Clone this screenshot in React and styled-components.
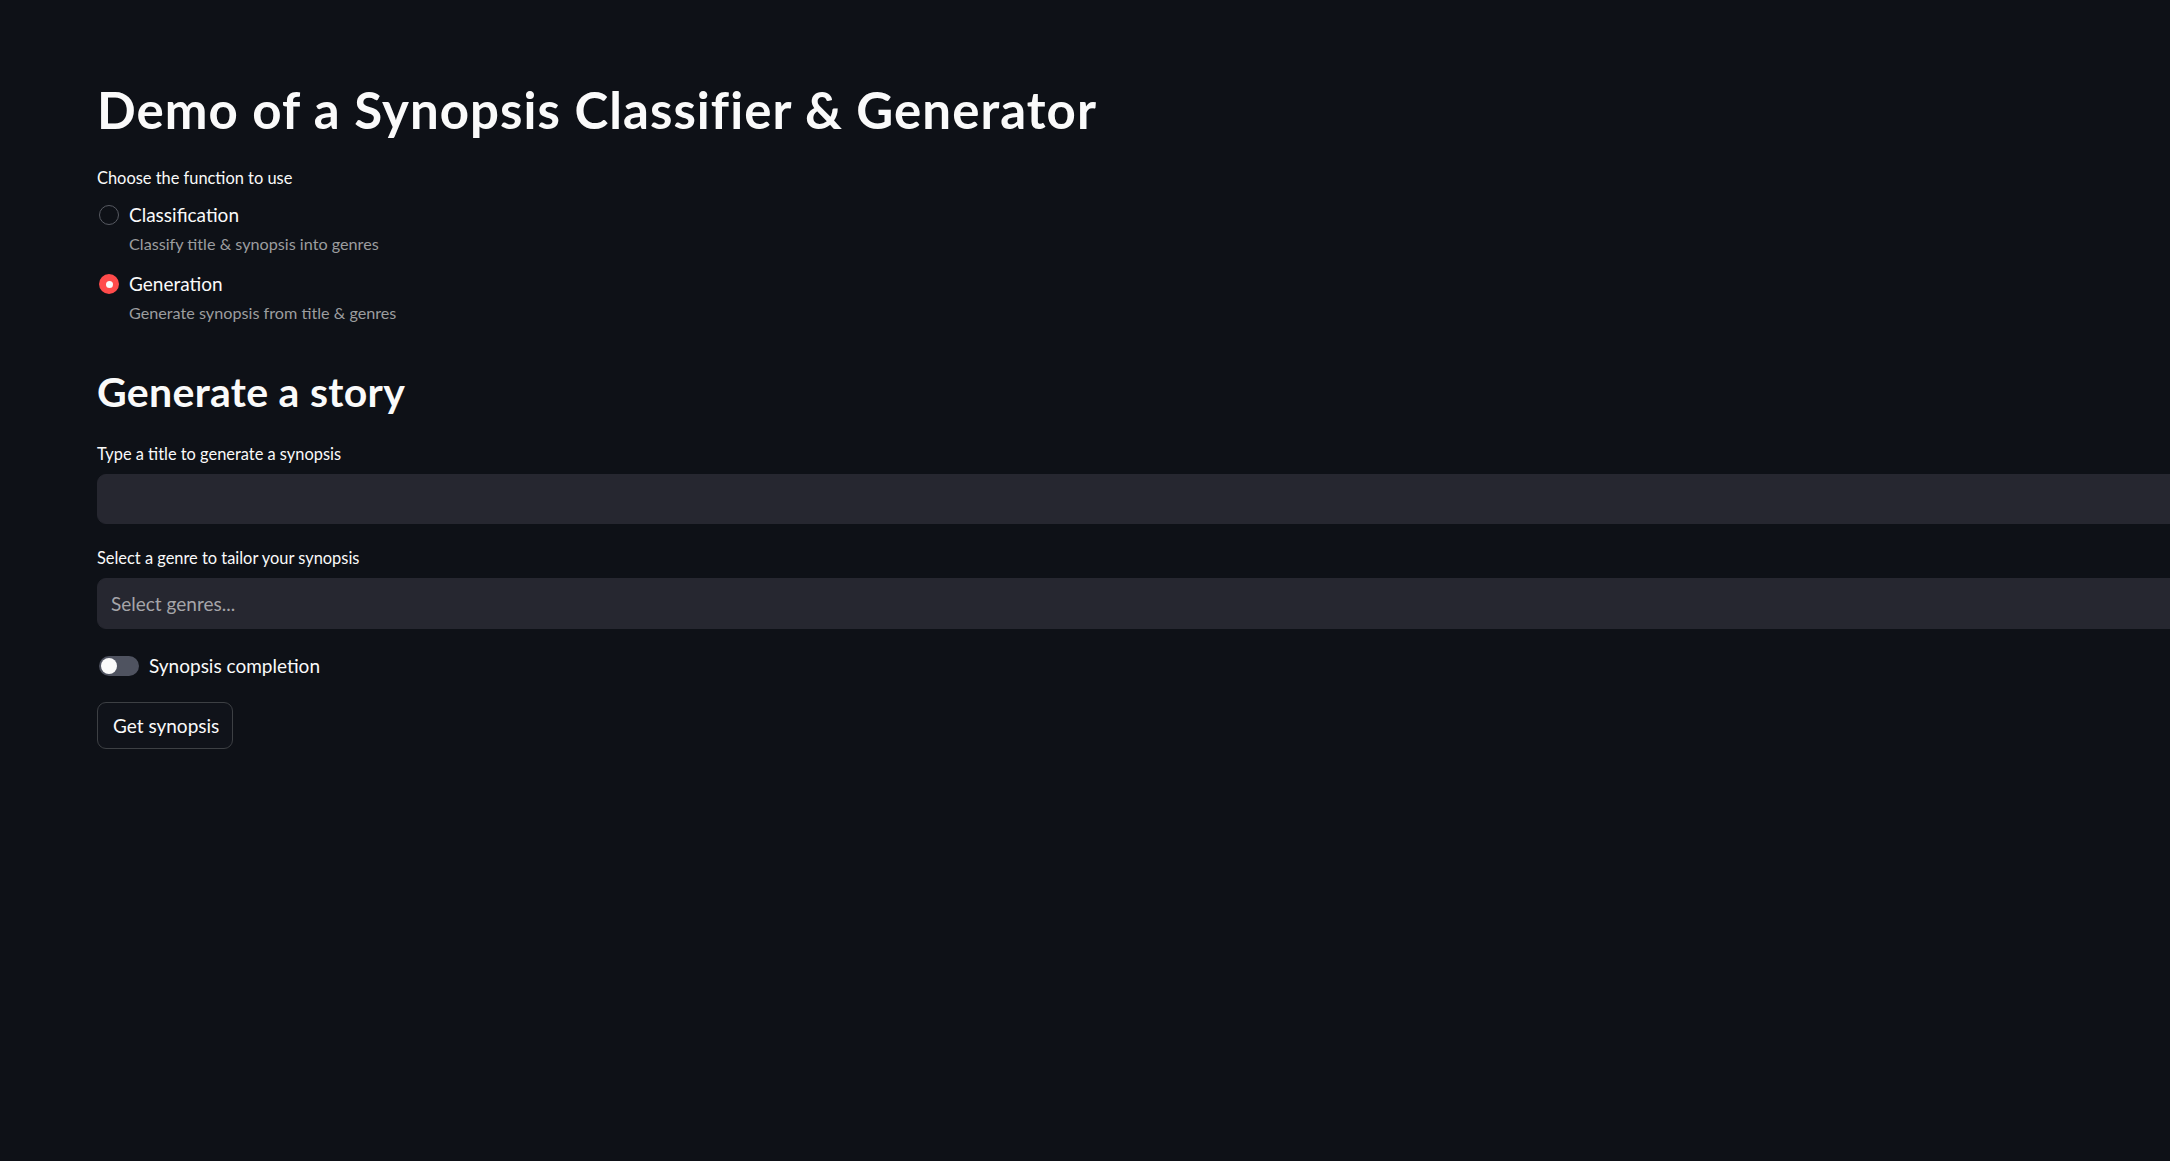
import React from "react";
import styled, { createGlobalStyle } from "styled-components";

const GlobalStyle = createGlobalStyle`
  html, body {
    margin: 0;
    padding: 0;
    background: #0e1117;
    overflow: hidden;
  }
  body {
    font-family: Lato, "Noto Sans", sans-serif;
    color: #fafafa;
  }
  * { box-sizing: border-box; }
`;

const Page = styled.main`
  width: 2240px;
  min-height: 100vh;
  padding: 80px 0 0 97px;
  display: flex;
  flex-direction: column;
`;

const Title = styled.h1`
  margin: 0;
  font-size: 51px;
  line-height: 60px;
  font-weight: 700;
  letter-spacing: 1.05px;
`;

const SectionTitle = styled.h2`
  margin: ${(p) => p.$top}px 0 0;
  font-size: 41px;
  line-height: 48px;
  font-weight: 700;
  letter-spacing: 0.3px;
`;

const Label = styled.div`
  margin-top: ${(p) => p.$top}px;
  font-size: 16.4px;
  line-height: 20px;
  font-weight: 400;
  color: #fafafa;
`;

const RadioList = styled.div`
  display: flex;
  flex-direction: column;
  gap: 18px;
  margin-top: 15px;
`;

const RadioOption = styled.div`
  display: flex;
  flex-direction: column;
  gap: 7px;
`;

const RadioRow = styled.div`
  display: flex;
  align-items: center;
  gap: 10px;
  font-size: 19px;
  line-height: 24px;
`;

const RadioDot = styled.span`
  width: 20px;
  height: 20px;
  border-radius: 50%;
  margin-left: 2px;
  flex: none;
  border: ${(p) => (p.$checked ? "none" : "1.6px solid #575a62")};
  background: ${(p) => (p.$checked ? "#ff4b4b" : "transparent")};
  display: flex;
  align-items: center;
  justify-content: center;
  &::after {
    content: "";
    display: ${(p) => (p.$checked ? "block" : "none")};
    width: 7px;
    height: 7px;
    border-radius: 50%;
    background: #fafafa;
  }
`;

const Caption = styled.div`
  padding-left: 32px;
  font-size: 16.2px;
  line-height: 20px;
  color: #9c9d9f;
`;

const Input = styled.div`
  margin-top: ${(p) => p.$top}px;
  height: ${(p) => p.$h}px;
  width: 100%;
  background: #262730;
  border: 1px solid #262730;
  border-radius: 9px;
  display: flex;
  align-items: center;
  padding-left: 13px;
  font-size: 19px;
  color: #a5a5a9;
`;

const ToggleRow = styled.div`
  margin-top: 25px;
  display: flex;
  align-items: center;
  gap: 10px;
  font-size: 19px;
  line-height: 24px;
  padding-left: 2px;
`;

const Track = styled.span`
  position: relative;
  width: 40px;
  height: 20px;
  border-radius: 10px;
  background: #4f5360;
  flex: none;
`;

const Knob = styled.span`
  position: absolute;
  top: 2px;
  left: 2px;
  width: 16px;
  height: 16px;
  border-radius: 50%;
  background: #fafafa;
`;

const Button = styled.button`
  margin-top: 24px;
  align-self: flex-start;
  width: 136px;
  height: 47px;
  padding: 0 0 0 15px;
  text-align: left;
  background: #10131a;
  border: 1px solid #3d4044;
  border-radius: 9px;
  color: #fafafa;
  font-family: inherit;
  font-size: 19px;
`;

export default function App() {
  return (
    <>
      <GlobalStyle />
      <Page>
        <Title>Demo of a Synopsis Classifier &amp; Generator</Title>
        <Label $top={28}>Choose the function to use</Label>
        <RadioList>
          <RadioOption>
            <RadioRow>
              <RadioDot />
              Classification
            </RadioRow>
            <Caption>Classify title &amp; synopsis into genres</Caption>
          </RadioOption>
          <RadioOption>
            <RadioRow>
              <RadioDot $checked />
              Generation
            </RadioRow>
            <Caption>Generate synopsis from title &amp; genres</Caption>
          </RadioOption>
        </RadioList>
        <SectionTitle $top={45}>Generate a story</SectionTitle>
        <Label $top={28}>Type a title to generate a synopsis</Label>
        <Input $top={10} $h={50} />
        <Label $top={24}>Select a genre to tailor your synopsis</Label>
        <Input $top={10} $h={51}>Select genres...</Input>
        <ToggleRow>
          <Track>
            <Knob />
          </Track>
          Synopsis completion
        </ToggleRow>
        <Button>Get synopsis</Button>
      </Page>
    </>
  );
}
